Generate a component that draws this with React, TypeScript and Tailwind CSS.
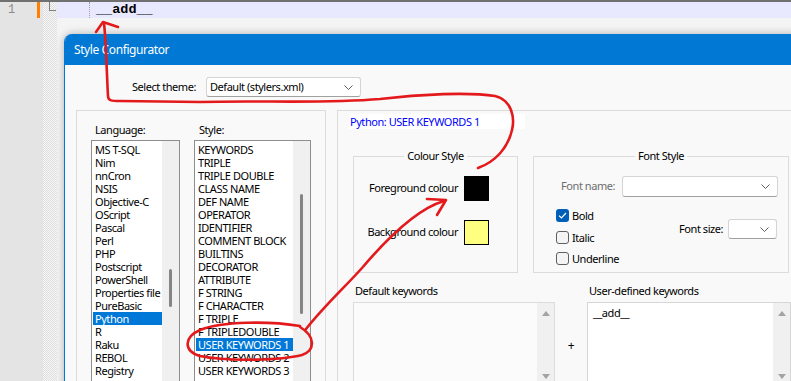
import React from "react";

const languages = [
  "MS T-SQL",
  "Nim",
  "nnCron",
  "NSIS",
  "Objective-C",
  "OScript",
  "Pascal",
  "Perl",
  "PHP",
  "Postscript",
  "PowerShell",
  "Properties file",
  "PureBasic",
  "Python",
  "R",
  "Raku",
  "REBOL",
  "Registry",
];

const styles = [
  "KEYWORDS",
  "TRIPLE",
  "TRIPLE DOUBLE",
  "CLASS NAME",
  "DEF NAME",
  "OPERATOR",
  "IDENTIFIER",
  "COMMENT BLOCK",
  "BUILTINS",
  "DECORATOR",
  "ATTRIBUTE",
  "F STRING",
  "F CHARACTER",
  "F TRIPLE",
  "F TRIPLEDOUBLE",
  "USER KEYWORDS 1",
  "USER KEYWORDS 2",
  "USER KEYWORDS 3",
];

function Chevron() {
  return (
    <svg width="9" height="5" viewBox="0 0 9 5" className="shrink-0">
      <path d="M0.5 0.5 L4.5 4.5 L8.5 0.5" fill="none" stroke="#5f5f5f" strokeWidth="1" />
    </svg>
  );
}

function Combo({ className, text }: { className: string; text?: string }) {
  return (
    <div
      className={`flex items-center justify-between rounded-[3px] border border-[#d4d4d4] border-b-[#a0a0a0] bg-white pl-[3px] pr-[7px] ${className}`}
    >
      <span className="whitespace-nowrap">{text}</span>
      <Chevron />
    </div>
  );
}

function ListBox({
  items,
  selected,
  className,
  thumbClass,
}: {
  items: string[];
  selected: string;
  className: string;
  thumbClass: string;
}) {
  return (
    <div className={`flex h-[245px] border border-[#8e8e8e] bg-white ${className}`}>
      <div className="min-w-0 flex-1 overflow-hidden pt-[2px]">
        {items.map((item) => (
          <div
            key={item}
            className={`ml-[1px] h-[13px] whitespace-nowrap pl-[2px] leading-[13px] ${
              item === selected ? "bg-[#0078d7] text-white" : "text-black"
            }`}
          >
            {item}
          </div>
        ))}
      </div>
      <div className="w-[17px] shrink-0 bg-[#f0f0f0]">
        <div className={`ml-[7px] w-[3px] rounded-full bg-[#858585] ${thumbClass}`} />
      </div>
    </div>
  );
}

function CheckBox({ label, checked }: { label: string; checked?: boolean }) {
  return (
    <div className="flex h-[13px] items-center gap-[3px]">
      {checked ? (
        <div className="flex h-[13px] w-[13px] items-center justify-center rounded-[3px] bg-[#005fb8]">
          <svg width="9" height="7" viewBox="0 0 9 7">
            <path d="M1 3.6 L3.4 6 L8 1" fill="none" stroke="white" strokeWidth="1.2" />
          </svg>
        </div>
      ) : (
        <div className="h-[13px] w-[13px] rounded-[3px] border border-[#5f5f5f] bg-[#f4f4f4]" />
      )}
      <span className="leading-[13px]">{label}</span>
    </div>
  );
}

function ScrollTrack() {
  return (
    <div className="flex w-[17px] shrink-0 flex-col items-center justify-between bg-[#f0f0f0] pb-[4px] pt-[8px]">
      <svg width="8" height="5" viewBox="0 0 8 5">
        <path d="M4 0 L8 5 L0 5 Z" fill="#a3a3a3" />
      </svg>
      <svg width="8" height="5" viewBox="0 0 8 5">
        <path d="M0 0 L8 0 L4 5 Z" fill="#a3a3a3" />
      </svg>
    </div>
  );
}

function StyleDialog() {
  return (
    <div className="h-[360px] w-[760px] shrink-0 overflow-hidden rounded-tl-[8px] border-l border-[#0078d4] bg-[#f9f9f9] text-[11px] tracking-[-0.45px] text-black shadow-[0_0_9px_rgba(0,0,0,0.28)]">
      <div className="flex h-[31px] items-center bg-[#0078d4] pl-[9px] text-[12px] tracking-[-0.4px] text-white">
        Style Configurator
      </div>

      <div className="mt-[12px] flex h-[20px] items-center gap-[10px] pl-[67px]">
        <span>Select theme:</span>
        <Combo className="h-[20px] w-[155px]" text="Default (stylers.xml)" />
      </div>

      <div className="mt-[13px] flex gap-[11px] pl-[11px]">
        <div className="flex h-[290px] w-[250px] shrink-0 gap-[14px] border border-[#dcdcdc] pl-[14px] pt-[11px]">
          <div className="w-[89px]">
            <div className="mb-[2px] h-[16px] pl-[4px] leading-[16px]">Language:</div>
            <ListBox items={languages} selected="Python" className="w-[89px]" thumbClass="mt-[128px] h-[38px]" />
          </div>
          <div className="w-[117px]">
            <div className="mb-[2px] h-[16px] pl-[5px] leading-[16px]">Style:</div>
            <ListBox items={styles} selected="USER KEYWORDS 1" className="w-[117px]" thumbClass="mt-[53px] h-[120px]" />
          </div>
        </div>

        <div className="h-[290px] w-[470px] shrink-0 border border-[#dcdcdc] pl-[15px] pt-[3px]">
          <div className="-ml-[4px] h-[15px] w-[176px] bg-white pl-[1px] leading-[15px] text-[#0000ff]">
            Python: USER KEYWORDS 1
          </div>

          <div className="mt-[20px] flex gap-[15px]">
            <fieldset className="h-[124px] w-[165px] border border-[#dcdcdc]">
              <legend className="mx-auto px-[3px] leading-[14px]">Colour Style</legend>
              <div className="mt-[13px] flex flex-col items-end gap-[19px] pr-[28px]">
                <div className="flex items-center gap-[6px]">
                  <span>Foreground colour</span>
                  <div className="h-[25px] w-[25px] bg-black" />
                </div>
                <div className="flex items-center gap-[6px]">
                  <span>Background colour</span>
                  <div className="h-[25px] w-[25px] border border-black bg-[#ffff80]" />
                </div>
              </div>
            </fieldset>

            <fieldset className="h-[124px] w-[256px] border border-[#dcdcdc]">
              <legend className="mx-auto px-[3px] leading-[14px]">Font Style</legend>
              <div className="mt-[13px] pl-[22px] pr-[10px]">
                <div className="flex items-center justify-end gap-[7px]">
                  <span className="text-[#6d6d6d]">Font name:</span>
                  <Combo className="h-[21px] w-[156px]" />
                </div>
                <div className="mt-[12px] flex justify-between">
                  <div className="flex flex-col gap-[8.5px]">
                    <CheckBox label="Bold" checked />
                    <CheckBox label="Italic" />
                    <CheckBox label="Underline" />
                  </div>
                  <div className="mt-[10px] flex h-[20px] items-center gap-[5px] self-start pr-[1px]">
                    <span>Font size:</span>
                    <Combo className="h-[20px] w-[49px]" />
                  </div>
                </div>
              </div>
            </fieldset>
          </div>

          <div className="mt-[11px] flex">
            <div className="w-[202px] shrink-0">
              <div className="h-[14px] pl-[2px] leading-[14px]">Default keywords</div>
              <div className="mt-[4px] flex h-[82px] justify-end border border-[#dcdcdc] bg-[#fbfbfb]">
                <ScrollTrack />
              </div>
            </div>
            <div className="w-[32px] shrink-0 pt-[55px] text-center text-[12px] leading-[14px]">+</div>
            <div className="w-[204px] shrink-0">
              <div className="h-[14px] pl-[2px] leading-[14px]">User-defined keywords</div>
              <div className="mt-[4px] flex h-[82px] border border-[#d6d6d6] bg-white">
                <div className="flex-1 pl-[5px] pt-[3px] leading-[14px]">__add__</div>
                <ScrollTrack />
              </div>
            </div>
          </div>
        </div>
      </div>
    </div>
  );
}

export default function App() {
  return (
    <div className="relative h-[381px] w-[791px] overflow-hidden bg-[#f4f4f4] font-['Noto_Sans',sans-serif]">
      <div className="h-[2px] bg-[#707070]" />
      <div className="flex h-[379px]">
        <div className="w-[37px] shrink-0 bg-[#e4e4e4]">
          <div className="h-[16px] pl-[8px] font-['Liberation_Mono',monospace] text-[12px] leading-[16px] text-[#8a8a8a]">
            1
          </div>
        </div>
        <div className="w-[6px] shrink-0 bg-[#e4e4e4]">
          <div className="h-[16px] w-[3px] bg-[#ff8000]" />
        </div>
        <div className="w-[14px] shrink-0 bg-[image:repeating-conic-gradient(#dedede_0%_25%,#f6f6f6_0%_50%)] bg-[length:2px_2px]">
          <div className="ml-[6px] h-[9px] w-[7px] border-b border-l border-[#808080]" />
        </div>
        <div className="flex min-w-0 flex-1 flex-col">
          <div className="flex h-[16px] shrink-0 items-center bg-[#e8e8ff]">
            <div className="ml-[32px] h-[16px] w-[1px] border-l border-dotted border-[#a0a0a0]" />
            <span className="ml-[6px] font-['Liberation_Mono',monospace] text-[13.5px] font-bold leading-[16px] text-black">
              __add__
            </span>
          </div>
          <div className="min-h-0 flex-1 overflow-hidden pl-[7px] pt-[16px]">
            <StyleDialog />
          </div>
        </div>
      </div>

      <svg
        className="pointer-events-none absolute left-0 top-0"
        width="791"
        height="381"
        viewBox="0 0 791 381"
        fill="none"
        stroke="#e3191c"
        strokeWidth="2.6"
        strokeLinecap="round"
        strokeLinejoin="round"
      >
        <path d="M96 32 L103 22 L118 27" />
        <path d="M104 23 C106 40 107 80 108 96 C108 101 112 101 120 101 L200 102 C260 100 320 104 380 99 C420 94 470 92 495 96 C512 100 515 118 512 130 C508 148 495 162 478 168" />
        <path d="M427 199 L446 200 L437 215" />
        <path d="M444 201 C420 208 390 235 362 268 C345 287 325 305 306 329" />
        <path d="M300 326 C270 321 222 321 200 330 C184 337 183 351 200 356 C230 362 282 360 302 355 C316 350 315 336 300 327" />
      </svg>
    </div>
  );
}
